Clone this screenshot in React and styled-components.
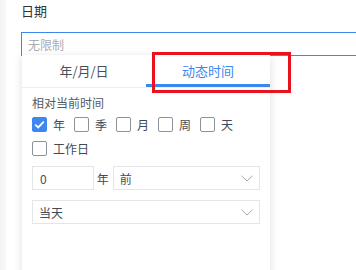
import React from 'react';
import styled, { createGlobalStyle } from 'styled-components';

const GlobalStyle = createGlobalStyle`
  html, body {
    margin: 0;
    padding: 0;
    background: linear-gradient(to right, #f3f4f5 0, #f7f7f8 5px, #fff 7px);
    font-family: "Noto Sans CJK SC", "Noto Sans", sans-serif;
    overflow: hidden;
  }
`;

const Page = styled.div`
  position: relative;
  width: 356px;
  height: 270px;
  overflow: hidden;
  padding-left: 21px;
  box-sizing: border-box;
`;

const FieldLabel = styled.div`
  padding-top: 1px;
  height: 20px;
  line-height: 20px;
  font-size: 13px;
  color: #333;
`;

const DateInput = styled.div`
  margin-top: 11px;
  width: 360px;
  height: 24px;
  box-sizing: border-box;
  border: 1px solid #3d87f0;
  padding-left: 6px;
  display: flex;
  align-items: center;
  font-size: 12px;
  color: #a9adb5;
`;

const Panel = styled.div`
  position: relative;
  z-index: 1;
  margin-top: -1px;
  margin-left: 1px;
  width: 248px;
  height: 230px;
  background: #fff;
  box-shadow: 0 2px 9px rgba(0, 0, 0, 0.13);
`;

const Tabs = styled.div`
  display: flex;
  height: 32px;
  border-bottom: 1px solid #eceef1;
`;

const Tab = styled.div`
  flex: 1;
  display: flex;
  align-items: center;
  justify-content: center;
  box-sizing: border-box;
  padding-top: 1px;
  font-size: 13px;
  color: ${p => (p.$active ? '#3d87f0' : '#4a505c')};
  border-bottom: 3px solid ${p => (p.$active ? '#3d87f0' : 'transparent')};
`;

const Body = styled.div`
  padding: 6px 10px 0 10px;
`;

const Title = styled.div`
  height: 18px;
  line-height: 18px;
  font-size: 12px;
  color: #555a64;
`;

const CheckRow = styled.div`
  display: flex;
  height: 24px;
  align-items: center;
`;

const CheckItem = styled.label`
  display: flex;
  align-items: center;
  margin-right: 9px;
  font-size: 12px;
  color: #444a55;
`;

const Box = styled.span`
  width: 15px;
  height: 15px;
  box-sizing: border-box;
  border-radius: 2px;
  margin-right: 6px;
  display: flex;
  align-items: center;
  justify-content: center;
  border: 1px solid ${p => (p.$checked ? '#3d87f0' : '#8d939e')};
  background: ${p => (p.$checked ? '#3d87f0' : '#fff')};
`;

const OffsetRow = styled.div`
  display: flex;
  align-items: center;
  margin-top: 6px;
  font-size: 12px;
  color: #444a55;
`;

const NumberBox = styled.div`
  width: 62px;
  height: 24px;
  box-sizing: border-box;
  border: 1px solid #e3e5e9;
  padding-left: 7px;
  display: flex;
  align-items: center;
  font-size: 12px;
  color: #444a55;
  margin-right: 3px;
`;

const Unit = styled.span`
  margin-right: 4px;
`;

const Select = styled.div`
  width: ${p => p.$width}px;
  height: 24px;
  box-sizing: border-box;
  border: 1px solid #e3e5e9;
  padding: 0 6px 0 6px;
  display: flex;
  align-items: center;
  justify-content: space-between;
  font-size: 12px;
  color: #444a55;
  margin-top: ${p => p.$top || 0}px;
`;

const Highlight = styled.div`
  position: absolute;
  left: 152px;
  top: 52px;
  width: 139px;
  height: 41px;
  box-sizing: border-box;
  border: 3px solid #e8131c;
  z-index: 2;
  pointer-events: none;
`;

const Check = () => (
  <svg width="11" height="9" viewBox="0 0 11 9">
    <polyline points="1.2,4.6 4.2,7.4 9.8,1.6" fill="none" stroke="#fff" strokeWidth="1.8" />
  </svg>
);

const Chevron = () => (
  <svg width="12" height="7" viewBox="0 0 12 7">
    <polyline points="0.5,0.8 6,6 11.5,0.8" fill="none" stroke="#a3a8b1" strokeWidth="1" />
  </svg>
);

const units = ['年', '季', '月', '周', '天'];

export default function App() {
  return (
    <Page>
      <GlobalStyle />
      <FieldLabel>日期</FieldLabel>
      <DateInput>无限制</DateInput>
      <Panel>
        <Tabs>
          <Tab>年/月/日</Tab>
          <Tab $active>动态时间</Tab>
        </Tabs>
        <Body>
          <Title>相对当前时间</Title>
          <CheckRow>
            {units.map((u, i) => (
              <CheckItem key={u}>
                <Box $checked={i === 0}>{i === 0 && <Check />}</Box>
                {u}
              </CheckItem>
            ))}
          </CheckRow>
          <CheckRow>
            <CheckItem>
              <Box />
              工作日
            </CheckItem>
          </CheckRow>
          <OffsetRow>
            <NumberBox>0</NumberBox>
            <Unit>年</Unit>
            <Select $width={148}>
              <span>前</span>
              <Chevron />
            </Select>
          </OffsetRow>
          <Select $width={228} $top={10}>
            <span>当天</span>
            <Chevron />
          </Select>
        </Body>
      </Panel>
      <Highlight />
    </Page>
  );
}
